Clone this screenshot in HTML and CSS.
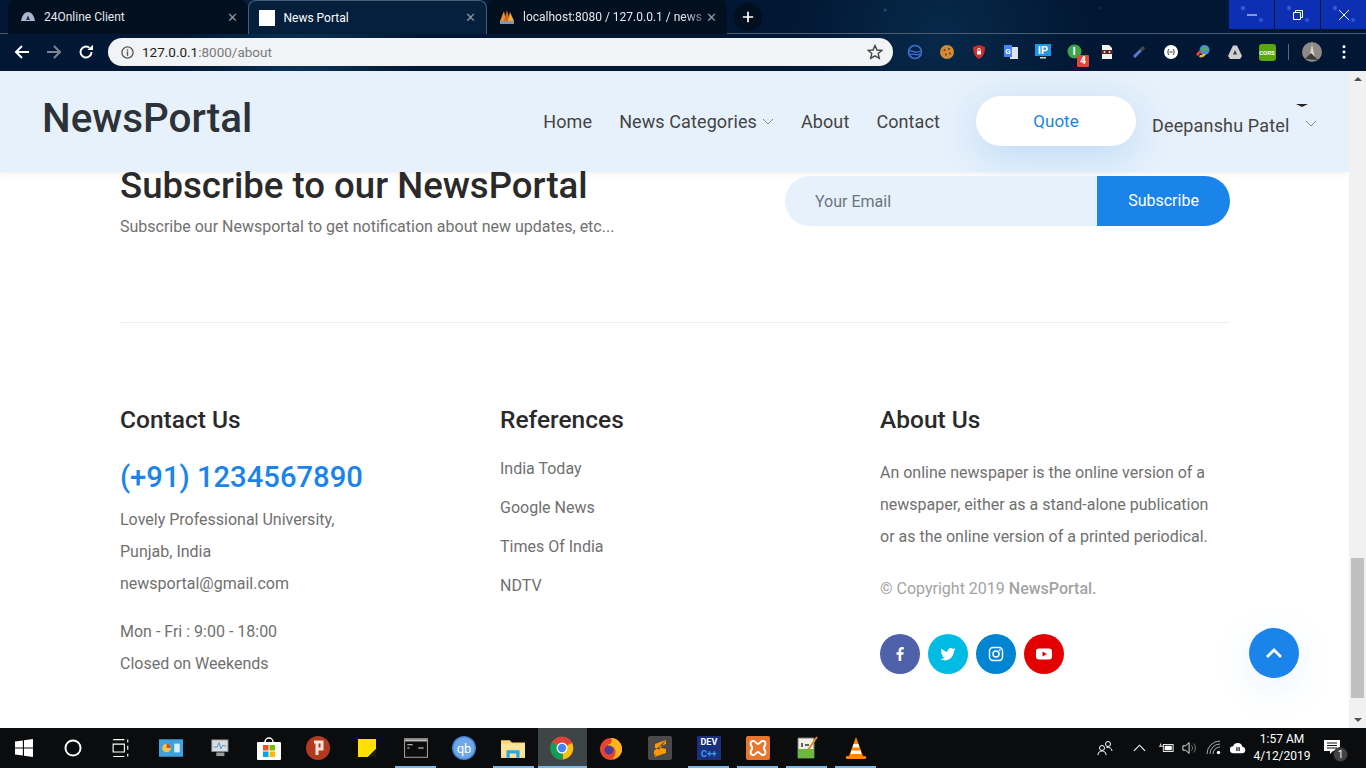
FILE: index.html
```html
<!DOCTYPE html>
<html lang="en">
<head>
  <meta charset="UTF-8">
  <title>News Portal</title>
  <link rel="stylesheet" href="styles.css">
</head>
<body>

  <!-- browser window top -->
  <div class="browser">
    <div class="tabstrip">
      <div class="tab">
        <svg class="tab-icon" viewBox="0 0 16 16"><path d="M1 12 C2 6 5 3 8 3 C11 3 14 6 15 12 Z" fill="#a9b6cc"/><path d="M6 11 L8 6.5 L10 11 Z" fill="#24304c"/></svg>
        <span class="tab-title">24Online Client</span>
        <span class="tab-close">✕</span>
      </div>
      <div class="tab active">
        <span class="blank-favicon"></span>
        <span class="tab-title">News Portal</span>
        <span class="tab-close">✕</span>
      </div>
      <div class="tab">
        <svg class="tab-icon" viewBox="0 0 16 16"><path d="M1 12 L5 2 L7 12 Z" fill="#e8912c"/><path d="M5 12 L8 1 L11 12 Z" fill="#d9661f"/><path d="M9 12 L11 3 L15 12 Z" fill="#f0ac3c"/><rect x="1" y="12" width="14" height="3" fill="#8a93a8"/></svg>
        <span class="tab-title fade">localhost:8080 / 127.0.0.1 / news</span>
        <span class="tab-close">✕</span>
      </div>
      <div class="newtab">
        <svg viewBox="0 0 14 14"><path d="M7 1 V13 M1 7 H13" stroke="#fff" stroke-width="2"/></svg>
      </div>
      <div class="winctl">
        <span class="winbtn"><svg viewBox="0 0 10 10"><path d="M0 5 H10" stroke="#fff"/></svg></span>
        <span class="winbtn"><svg viewBox="0 0 10 10"><path d="M2.5 2.5 V.5 H9.5 V7.5 H7.5 M.5 2.5 H7.5 V9.5 H.5 Z" stroke="#fff" fill="none"/></svg></span>
        <span class="winbtn"><svg viewBox="0 0 10 10"><path d="M0 0 L10 10 M10 0 L0 10" stroke="#fff"/></svg></span>
      </div>
    </div>
    <div class="toolbar">
      <svg class="navicon" viewBox="0 0 16 16"><path d="M15 8 H2 M8 2 L2 8 L8 14" stroke="#fff" stroke-width="2" fill="none"/></svg>
      <svg class="navicon" viewBox="0 0 16 16"><path d="M1 8 H14 M8 2 L14 8 L8 14" stroke="#7d8791" stroke-width="2" fill="none"/></svg>
      <svg class="navicon" viewBox="0 0 16 16"><path d="M13.5 8 A5.5 5.5 0 1 1 11.5 3.8" stroke="#fff" stroke-width="2" fill="none"/><path d="M9.5 6 H15 V.8 Z" fill="#fff"/></svg>
      <div class="omnibox">
        <svg class="info" viewBox="0 0 14 14"><circle cx="7" cy="7" r="6" fill="none" stroke="#555" stroke-width="1.4"/><path d="M7 6 V10.5 M7 3.5 V5" stroke="#555" stroke-width="1.5"/></svg>
        <span class="url"><span class="url-host">127.0.0.1</span>:8000/about</span>
        <svg class="star" viewBox="0 0 16 16"><path d="M8 1.5 L10 6 L14.8 6.4 L11.2 9.6 L12.3 14.4 L8 11.8 L3.7 14.4 L4.8 9.6 L1.2 6.4 L6 6 Z" fill="none" stroke="#444" stroke-width="1.4"/></svg>
      </div>
      <div class="extensions">
        <span class="ext"><svg viewBox="0 0 16 16"><circle cx="8" cy="8" r="6.5" fill="none" stroke="#3a6fd8" stroke-width="1.6"/><path d="M2 8 C5 4 7 11 14 7 M3 11 C6 8 9 13 13 10" stroke="#3a6fd8" fill="none" stroke-width="1.3"/></svg></span>
        <span class="ext"><svg viewBox="0 0 16 16"><circle cx="8" cy="8" r="7" fill="#d08a38"/><circle cx="5.5" cy="6" r="1" fill="#6b3a12"/><circle cx="10" cy="5" r="1" fill="#6b3a12"/><circle cx="7" cy="10.5" r="1" fill="#6b3a12"/><circle cx="11" cy="9.5" r="1" fill="#6b3a12"/></svg></span>
        <span class="ext"><svg viewBox="0 0 16 16"><path d="M8 1 L14 3 C14 9 12 13 8 15 C4 13 2 9 2 3 Z" fill="#c9302c"/><rect x="6" y="7" width="4" height="3.5" fill="#fff"/><path d="M6.8 7 V5.6 A1.2 1.2 0 0 1 9.2 5.6 V7" stroke="#fff" fill="none"/></svg></span>
        <span class="ext"><svg viewBox="0 0 16 16"><rect x="7" y="3" width="8" height="12" fill="#dfe3ea"/><rect x="1" y="1" width="8" height="12" fill="#4285f4"/><text x="5" y="10" text-anchor="middle" class="ext-text">G</text></svg></span>
        <span class="ext"><svg viewBox="0 0 16 16"><rect x="0" y="0" width="16" height="12" fill="#1e96e6"/><text x="8" y="10" text-anchor="middle" class="ext-ip">IP</text><rect x="5" y="13" width="6" height="1.5" fill="#cfd8e0"/></svg></span>
        <span class="ext"><svg viewBox="0 0 16 16"><circle cx="7.5" cy="7.500" r="7" fill="#3fa34d"/><text x="7" y="11" text-anchor="middle" class="ext-ip">I</text></svg><span class="ext-badge">4</span></span>
        <span class="ext"><svg viewBox="0 0 16 16"><path d="M3 1 H10 L13 4 V15 H3 Z" fill="#f2f2f2"/><rect x="2" y="6" width="12" height="4" rx="1" fill="#5a2420"/><circle cx="5.5" cy="8" r="1" fill="#f2f2f2"/><circle cx="10.5" cy="8" r="1" fill="#f2f2f2"/></svg></span>
        <span class="ext"><svg viewBox="0 0 16 16"><path d="M3 13 L10 6" stroke="#5a77c8" stroke-width="3"/><path d="M10 6 L13 3" stroke="#444" stroke-width="3.5"/></svg></span>
        <span class="ext"><svg viewBox="0 0 16 16"><circle cx="8" cy="8" r="7" fill="#fff"/><path d="M6 5 C4.5 7 4.5 9 6 11 M10 5 C11.5 7 11.5 9 10 11 M6.5 8 H9.5" stroke="#333" fill="none"/></svg></span>
        <span class="ext"><svg viewBox="0 0 16 16"><circle cx="9.5" cy="6" r="5" fill="#4a90d9"/><path d="M6 5 C8 3 11 3 13 6 L9 7 Z" fill="#56b04a"/><path d="M1 11 C2 7 5 6 7 7 L6 9 C5 9 4 10 4 12 Z" fill="#e8452c"/><path d="M4 13 C6 14 10 13 11 10 L8 10 C7 11 6 11 5 11 Z" fill="#f5b82e"/></svg></span>
        <span class="ext"><svg viewBox="0 0 16 16"><path d="M6 1.5 H10 L15 12 L13 15 H3 L1 12 Z" fill="#cfcfcf"/><path d="M8 6 L10 10.5 H6 Z" fill="#3a3a3a"/></svg></span>
        <span class="ext"><span class="cors">CORS</span></span>
      </div>
      <span class="toolbar-sep"></span>
      <svg class="avatar" viewBox="0 0 20 20"><circle cx="10" cy="10" r="10" fill="#8d8a86"/><path d="M10 2 L13 16 L7 16 Z" fill="#d8d4cc"/><path d="M3 17 L9 11 L16 18 Z" fill="#3c3a38"/></svg>
      <svg class="menu-dots" viewBox="0 0 4 16"><circle cx="2" cy="2" r="1.7" fill="#fff"/><circle cx="2" cy="8" r="1.7" fill="#fff"/><circle cx="2" cy="14" r="1.7" fill="#fff"/></svg>
    </div>
  </div>

  <!-- page viewport -->
  <div class="viewport">
    <div class="page">
      <header class="site-header">
        <a class="logo">NewsPortal</a>
        <nav class="nav">
          <a>Home</a>
          <a>News Categories <svg class="chev" viewBox="0 0 12 7"><path d="M1 1 L6 6 L11 1" fill="none" stroke="#888"/></svg></a>
          <a>About</a>
          <a>Contact</a>
        </nav>
        <a class="quote">Quote</a>
        <div class="user">
          <span class="caret"></span>
          <span class="user-name">Deepanshu Patel</span>
          <svg class="chev user-chev" viewBox="0 0 12 7"><path d="M1 1 L6 6 L11 1" fill="none" stroke="#888"/></svg>
        </div>
      </header>

      <section class="subscribe">
        <div>
          <h2>Subscribe to our NewsPortal</h2>
          <p>Subscribe our Newsportal to get notification about new updates, etc...</p>
        </div>
        <form class="subscribe-form">
          <span class="email">Your Email</span>
          <span class="subscribe-btn">Subscribe</span>
        </form>
      </section>

      <footer class="footer">
        <div class="col">
          <h3>Contact Us</h3>
          <div class="phone">(+91) 1234567890</div>
          <ul class="lines">
            <li>Lovely Professional University,</li>
            <li>Punjab, India</li>
            <li>newsportal@gmail.com</li>
          </ul>
          <ul class="lines hours">
            <li>Mon - Fri : 9:00 - 18:00</li>
            <li>Closed on Weekends</li>
          </ul>
        </div>
        <div class="col">
          <h3>References</h3>
          <ul class="refs">
            <li>India Today</li>
            <li>Google News</li>
            <li>Times Of India</li>
            <li>NDTV</li>
          </ul>
        </div>
        <div class="col">
          <h3>About Us</h3>
          <p class="about">An online newspaper is the online version of a newspaper, either as a stand-alone publication or as the online version of a printed periodical.</p>
          <p class="copy">© Copyright 2019 <b>NewsPortal.</b></p>
          <div class="social">
            <span class="soc fb"><svg viewBox="0 0 16 16"><path d="M9.2 15 V8.8 H11.4 L11.7 6.300 H9.200 V4.800 C9.200 4 9.500 3.500 10.500 3.500 H11.800 V1.200 C11.500 1.200 10.800 1.100 9.900 1.100 C8 1.100 6.600 2.300 6.600 4.500 V6.300 H4.500 V8.800 H6.600 V15 Z" fill="#fff"/></svg></span>
            <span class="soc tw"><svg viewBox="0 0 16 16"><path d="M15.500 3.300 C15 3.600 14.400 3.700 13.800 3.800 C14.400 3.400 14.900 2.800 15.100 2.100 C14.500 2.500 13.800 2.700 13.100 2.900 C12.500 2.300 11.700 1.900 10.800 1.900 C9.100 1.900 7.700 3.300 7.700 5 C7.700 5.200 7.700 5.500 7.800 5.700 C5.200 5.600 2.900 4.300 1.400 2.400 C1.100 2.900 1 3.400 1 4 C1 5.100 1.500 6 2.400 6.600 C1.900 6.600 1.400 6.400 1 6.200 C1 7.700 2.100 9 3.500 9.300 C3 9.400 2.600 9.500 2.100 9.400 C2.500 10.700 3.700 11.600 5 11.600 C3.600 12.700 1.900 13.200 .3 13 C1.700 13.900 3.300 14.400 5 14.400 C10.700 14.400 13.800 9.700 13.800 5.600 V5.200 C14.500 4.700 15.100 4.100 15.500 3.300 Z" fill="#fff"/></svg></span>
            <span class="soc ig"><svg viewBox="0 0 16 16"><rect x="1.500" y="1.500" width="13" height="13" rx="3.500" fill="none" stroke="#fff" stroke-width="1.500"/><circle cx="8" cy="8" r="3" fill="none" stroke="#fff" stroke-width="1.500"/><circle cx="11.800" cy="4.200" r=".9" fill="#fff"/></svg></span>
            <span class="soc yt"><svg viewBox="0 0 16 16"><rect x="0" y="2.500" width="16" height="11" rx="3" fill="#fff"/><path d="M6.500 5.500 L10.800 8 L6.500 10.500 Z" fill="#e30000"/></svg></span>
          </div>
        </div>
      </footer>

      <a class="to-top"><svg viewBox="0 0 18 12"><path d="M2 10 L9 3 L16 10" fill="none" stroke="#fff" stroke-width="2.800"/></svg></a>
    </div>

    <div class="scrollbar">
      <span class="arrow-up"></span>
      <span class="track"><span class="thumb"></span></span>
      <span class="arrow-down"></span>
    </div>
  </div>

  <!-- windows taskbar -->
  <div class="taskbar">
    <span class="slot"><svg viewBox="0 0 16 16"><path d="M0 2.300 L7 1.300 V7.500 H0 Z M8 1.100 L16 0 V7.500 H8 Z M0 8.500 H7 V14.700 L0 13.700 Z M8 8.500 H16 V16 L8 14.900 Z" fill="#fff"/></svg></span>
    <span class="slot"><svg viewBox="0 0 16 16"><circle cx="8" cy="8" r="6.700" fill="none" stroke="#fff" stroke-width="1.700"/></svg></span>
    <span class="slot"><svg viewBox="0 0 18 16"><path d="M1 .500 H11 M1 15.500 H11 M1 4.500 H11 V11.500 H1 Z M14 .500 V3 M14 6 V9.500 M14 13 V15.500" stroke="#fff" fill="none"/></svg></span>
    <span class="slot"><svg viewBox="0 0 22 16"><rect width="22" height="16" fill="#3da2e0"/><circle cx="7" cy="8" r="4" fill="#f5c542"/><path d="M7 8 V4 A4 4 0 0 1 11 8 Z" fill="#d64a2c"/><rect x="14" y="4" width="5" height="8" fill="#d8eefb"/></svg></span>
    <span class="slot"><svg viewBox="0 0 22 20"><rect x="2" y="1" width="18" height="13" fill="#d8dde2" stroke="#888"/><path d="M4 9 L8 9 L10 4 L12 11 L14 7 L18 8" stroke="#4a8ec8" fill="none"/><rect x="7" y="15" width="9" height="4" fill="#9a9a9a"/></svg></span>
    <span class="slot"><svg viewBox="0 0 24 24"><path d="M8 6 A4 4 0 0 1 16 6" fill="none" stroke="#fff" stroke-width="1.500"/><rect y="6" width="24" height="18" rx="1" fill="#fff"/><rect x="6" y="9" width="5.500" height="5.500" fill="#f25022"/><rect x="12.500" y="9" width="5.500" height="5.500" fill="#7fba00"/><rect x="6" y="15.500" width="5.500" height="5.500" fill="#00a4ef"/><rect x="12.500" y="15.500" width="5.500" height="5.500" fill="#ffb900"/></svg></span>
    <span class="slot"><svg viewBox="0 0 24 24"><circle cx="12" cy="12" r="12" fill="#b3391f"/><path d="M8 6 H16 V13 H11 M11 6 V19" fill="none" stroke="#f4e6da" stroke-width="3"/></svg></span>
    <span class="slot"><svg viewBox="0 0 18 18"><path d="M0 0 H18 V10 L10 18 H0 Z" fill="#ffdf00"/><path d="M18 10 V18 H10 Z" fill="#1a1a1a"/></svg></span>
    <span class="slot on"><svg viewBox="0 0 22 18"><rect x=".500" y=".500" width="21" height="17" fill="#0c0c0c" stroke="#999"/><rect x="1" y="1" width="20" height="2" fill="#bbb"/><path d="M3 6 H8 M3 9 H5 M13 9 H18" stroke="#ddd"/></svg></span>
    <span class="slot"><svg viewBox="0 0 24 24"><circle cx="12" cy="12" r="12" fill="#3f83d6"/><circle cx="12" cy="12" r="10.500" fill="#6ea6e6"/><text x="12" y="16.500" text-anchor="middle" class="qb">qb</text></svg></span>
    <span class="slot on split"><svg viewBox="0 0 22 18"><path d="M0 2 H8 L10 4 H22 V18 H0 Z" fill="#f7d774"/><rect y="5" width="22" height="13" fill="#fbe49a"/><path d="M5 18 V11 H17 V18 H14 V14 H8 V18 Z" fill="#29a8e0"/></svg></span>
    <span class="slot on current"><svg viewBox="0 0 24 24"><circle cx="12" cy="12" r="11.500" fill="#db4437"/><path d="M12 12 L22 7 A11.500 11.500 0 0 1 13 23.500 Z" fill="#f4c20d"/><path d="M12 12 L13 23.500 A11.500 11.500 0 0 1 2 6 Z" fill="#0f9d58"/><circle cx="12" cy="12" r="5.500" fill="#fff"/><circle cx="12" cy="12" r="4.200" fill="#4285f4"/></svg></span>
    <span class="slot"><svg viewBox="0 0 24 24"><circle cx="12" cy="13" r="11" fill="#e8442a"/><path d="M12 2 C19 2 24 8 23 15 C22 20 17 23 13 23 C17 20 18 14 14 11 C11 12 8 11 9 8 C11 9 14 7 12 2 Z" fill="#fbb41c"/><circle cx="10" cy="14" r="4.500" fill="#4d3a9c"/></svg></span>
    <span class="slot"><svg viewBox="0 0 24 24"><rect width="24" height="24" rx="2" fill="#4a4a4a"/><path d="M18 4 L7 8 V12 L15 15 L6 19 V15 M18 4 V8 L10 11 L18 13 V17 L6 21" fill="#ff9800"/></svg></span>
    <span class="slot on"><span class="devcpp"><span>DEV</span><span class="cpp">C++</span></span></span>
    <span class="slot on"><svg viewBox="0 0 24 24"><rect width="24" height="24" rx="2" fill="#e8762c"/><path d="M7 5 C10 5 10 8 12 8 C14 8 14 5 17 5 C20 5 20 9 18 11 V13 C20 15 20 19 17 19 C14 19 14 16 12 16 C10 16 10 19 7 19 C4 19 4 15 6 13 V11 C4 9 4 5 7 5 Z" fill="none" stroke="#fff" stroke-width="2"/></svg></span>
    <span class="slot on"><svg viewBox="0 0 24 24"><path d="M3 2 H19 V22 H3 Z" fill="#eef1e4" stroke="#777"/><rect x="3" y="13" width="16" height="9" fill="#6bb83a"/><path d="M7 7 V11 M10 9 H14" stroke="#333" stroke-width="1.500"/><path d="M22 1 L13 14" stroke="#d98a1f" stroke-width="2"/></svg></span>
    <span class="slot on"><svg viewBox="0 0 22 24"><path d="M11 1 L18 20 H4 Z" fill="#ff8800"/><path d="M8.500 8 H13.500 L14.500 11.500 H7.500 Z M6.500 14.500 H15.500 L16.500 18 H5.500 Z" fill="#f5f5f5"/><rect x="1" y="20" width="20" height="3" rx="1" fill="#ff8800"/></svg></span>

    <div class="tray">
      <svg class="tray-icon" viewBox="0 0 16 16"><circle cx="5" cy="8" r="2.500" fill="none" stroke="#fff"/><path d="M1 15 C1 12 3 11 5 11 C7 11 9 12 9 15" fill="none" stroke="#fff"/><circle cx="11" cy="4" r="2.500" fill="none" stroke="#fff"/><path d="M9.500 7.500 C12 7 15 8 15 11" fill="none" stroke="#fff"/></svg>
      <svg class="tray-icon up" viewBox="0 0 14 8"><path d="M1 7 L7 1 L13 7" fill="none" stroke="#fff" stroke-width="1.200"/></svg>
      <svg class="tray-icon" viewBox="0 0 18 14"><rect x="6" y="3" width="11" height="8" fill="none" stroke="#fff"/><rect x="7.500" y="4.500" width="8" height="5" fill="#fff"/><path d="M1 5 H6 M3 2 V5" stroke="#fff"/></svg>
      <svg class="tray-icon" viewBox="0 0 18 16"><path d="M1 5.500 H4 L8 2 V14 L4 10.500 H1 Z" fill="none" stroke="#fff"/><path d="M10.500 5 A4 4 0 0 1 10.500 11 M13 3 A7 7 0 0 1 13 13" fill="none" stroke="#888"/></svg>
      <svg class="tray-icon" viewBox="0 0 16 16"><path d="M1 14 A13 13 0 0 1 14 1 M4 14 A10 10 0 0 1 14 4 M7 14 A7 7 0 0 1 14 7" fill="none" stroke="#aaa"/><circle cx="12.500" cy="12.500" r="1.700" fill="#fff"/></svg>
      <svg class="tray-icon" viewBox="0 0 18 12"><path d="M4 12 A4 4 0 0 1 3.500 4 A5.500 5.500 0 0 1 14 4.500 A3.800 3.800 0 0 1 14 12 Z" fill="#fff"/><rect x="7" y="5" width="1.500" height="4.500" fill="#222"/><rect x="9.500" y="5" width="1.500" height="4.500" fill="#222"/></svg>
      <div class="clock">
        <span>1:57 AM</span>
        <span>4/12/2019</span>
      </div>
      <div class="notif">
        <svg viewBox="0 0 16 16"><path d="M0 1 H16 V12 H9 L6 15 V12 H0 Z" fill="#fff"/><path d="M3 4 H13 M3 6.500 H13 M3 9 H13" stroke="#111"/></svg>
        <span class="notif-count">1</span>
      </div>
    </div>
  </div>

</body>
</html>
```

FILE: styles.css
```css
* {
  box-sizing: border-box;
}

body {
  margin: 0;
  height: 100vh;
  overflow: hidden;
  display: flex;
  flex-direction: column;
  font-family: Roboto, sans-serif;
  background: #fff;
}

svg {
  display: block;
}

h2, h3, p, ul {
  margin: 0;
  padding: 0;
}

ul {
  list-style: none;
}

/* browser top */
.browser {
  height: 71px;
  flex-shrink: 0;
  background:
    radial-gradient(circle at 150px 50px, #5a7a9a 0, transparent 1px),
    radial-gradient(circle at 620px 45px, #4f7296 0, transparent 1px),
    radial-gradient(circle at 885px 10px, #3c6084 0, transparent 2px),
    radial-gradient(circle at 1100px 8px, #3c6084 0, transparent 1px),
    radial-gradient(circle at 300px 60px, #0a3358, transparent 120px),
    radial-gradient(circle at 940px 35px, #07294a, transparent 150px),
    #021733;
}

.tabstrip {
  height: 34px;
  display: flex;
  padding-left: 8px;
  border-bottom: 1px solid #4a5d74;
}

.tab {
  width: 239.500px;
  height: 34px;
  display: flex;
  align-items: center;
  padding: 0 9px 0 12px;
  color: #e4e8ee;
  font: 12px Roboto, sans-serif;
  background: #020f1f;
  border-radius: 8px 8px 0 0;
}

.tab.active {
  background: #04203c;
  color: #fff;
  padding-left: 10px;
  border: 1px solid #4a5d74;
  border-bottom: 0;
}

.tab-icon {
  width: 16px;
  height: 16px;
  margin-right: 8px;
  flex-shrink: 0;
}

.blank-favicon {
  width: 16px;
  height: 16px;
  margin-right: 9px;
  background: #fff;
  flex-shrink: 0;
}

.tab-title {
  flex: 1;
  white-space: nowrap;
  overflow: hidden;
}

.fade {
  -webkit-mask-image: linear-gradient(90deg, #000 90%, #0006);
}

.tab-close {
  color: #8b96a3;
  font-size: 13px;
  margin: 0 1px 0 4px;
}

.newtab {
  width: 28px;
  height: 28px;
  margin: 3px 0 0 7px;
  border-radius: 50%;
  background: #020f1f;
  display: flex;
  align-items: center;
  justify-content: center;
}

.newtab svg {
  width: 12px;
  height: 12px;
}

.winctl {
  margin-left: auto;
  height: 29px;
  display: flex;
  gap: 1px;
}

.winbtn {
  width: 45px;
  height: 29px;
  background: radial-gradient(circle at 14px 8px, #4a72e0 0, transparent 3px), radial-gradient(circle at 32px 20px, #3f66d8 0, transparent 3px), #0c2fb4;
  display: flex;
  align-items: center;
  justify-content: center;
}

.winbtn svg {
  width: 10px;
  height: 10px;
}

.toolbar {
  height: 37px;
  display: flex;
  align-items: center;
  padding: 0 0 1px 14px;
}

.navicon {
  width: 16px;
  height: 16px;
  margin-right: 16px;
}

.omnibox {
  width: 785px;
  height: 28px;
  margin-left: -2px;
  border-radius: 14px;
  background: #f1f3f4;
  display: flex;
  align-items: center;
  padding: 0 10px 0 13px;
  font-size: 13.500px;
  color: #7a7a7a;
}

.info {
  width: 13px;
  height: 13px;
  margin-right: 8px;
}

.url {
  flex: 1;
}

.url-host {
  color: #222;
}

.star {
  width: 16px;
  height: 16px;
}

.extensions {
  display: flex;
  margin-left: 6px;
}

.ext {
  width: 32px;
  height: 28px;
  position: relative;
  display: flex;
  align-items: center;
  justify-content: center;
}

.ext svg {
  width: 16px;
  height: 16px;
}

.ext-text {
  font: bold 8px Roboto, sans-serif;
  fill: #fff;
}

.ext-ip {
  font: bold 11px Roboto, sans-serif;
  fill: #fff;
}

.ext-badge {
  position: absolute;
  right: 2px;
  bottom: -1px;
  width: 12px;
  height: 12px;
  border-radius: 1px;
  background: #e2453c;
  color: #fff;
  font-size: 10px;
  font-weight: bold;
  line-height: 12px;
  text-align: center;
}

.cors {
  width: 17px;
  height: 17px;
  border-radius: 3px;
  background: #5aa70f;
  color: #fff;
  font-size: 6px;
  font-weight: bold;
  line-height: 17px;
  text-align: center;
}

.toolbar-sep {
  width: 1px;
  height: 16px;
  margin: 0 13px 0 5px;
  background: #5d6b79;
}

.avatar {
  width: 20px;
  height: 20px;
  margin-right: 20px;
}

.menu-dots {
  width: 4px;
  height: 14px;
}

/* page */
.viewport {
  flex: 1;
  display: flex;
  min-height: 0;
}

.page {
  flex: 1;
  position: relative;
  overflow: hidden;
}

.site-header {
  height: 101px;
  background: #e6f1fb;
  box-shadow: 0 2px 6px rgba(0, 0, 0, 0.06);
  display: flex;
  align-items: center;
  padding-left: 42px;
  color: #444;
  font-size: 18px;
}

.logo {
  font-size: 40.400px;
  font-weight: 500;
  color: #2d3238;
  margin-top: -6px;
}

.nav {
  display: flex;
  gap: 27px;
  margin-left: auto;
  margin-right: 36px;
  align-items: center;
  letter-spacing: 0.1px;
}

.nav a {
  display: flex;
  align-items: center;
  gap: 5px;
}

.chev {
  width: 12px;
  height: 7px;
}

.quote {
  width: 160px;
  height: 50px;
  margin-top: -2px;
  border-radius: 25px;
  background: #fff;
  color: #1a84ea;
  font-size: 17px;
  line-height: 50px;
  text-align: center;
  box-shadow: 0 10px 40px rgba(26, 132, 234, 0.2);
}

.user {
  width: 213px;
  align-self: stretch;
  position: relative;
  display: flex;
  align-items: center;
  padding: 8px 0 0 16px;
  letter-spacing: 0.15px;
}

.user-chev {
  margin-left: 16px;
  margin-top: -4px;
}

.caret {
  position: absolute;
  left: 160px;
  top: 33px;
  border-top: 3px solid #222;
  border-left: 6px solid transparent;
  border-right: 6px solid transparent;
}

.subscribe {
  margin: 0 119px 0 120px;
  display: flex;
  justify-content: space-between;
  padding-bottom: 83px;
  border-bottom: 1px solid #e6f1fb;
}

.subscribe h2 {
  font-size: 36.600px;
  font-weight: 500;
  line-height: 28px;
  color: #2a2a2a;
}

.subscribe p {
  font-size: 16px;
  line-height: 24px;
  margin-top: 15px;
  color: #707070;
}

.subscribe-form {
  width: 445px;
  height: 50px;
  margin-top: 4px;
  display: flex;
  font-size: 16px;
}

.email {
  flex: 1;
  background: #e6f1fb;
  border-radius: 25px 0 0 25px;
  line-height: 52px;
  padding-left: 30px;
  color: #6c757d;
}

.subscribe-btn {
  width: 133px;
  background: #1a84ea;
  color: #fff;
  border-radius: 0 25px 25px 0;
  line-height: 50px;
  text-align: center;
}

.footer {
  margin-left: 120px;
  padding-top: 79px;
  display: grid;
  grid-template-columns: 380px 380px 345px;
  color: #707070;
  font-size: 16px;
}

.footer h3 {
  font-size: 24.500px;
  font-weight: 500;
  line-height: 36px;
  color: #2a2a2a;
}

.phone {
  font-size: 29.200px;
  font-weight: 500;
  color: #1a84ea;
  line-height: 40px;
  margin: 19px 0 7px;
}

.lines li {
  line-height: 32px;
}

.hours {
  margin-top: 16px;
}

.refs {
  margin-top: 11px;
}

.refs li {
  line-height: 39px;
}

.about {
  line-height: 32px;
  margin-top: 19px;
}

.copy {
  color: #a3a3a3;
  line-height: 32px;
  margin-top: 20px;
}

.copy b {
  font-weight: 500;
}

.social {
  display: flex;
  gap: 8px;
  margin-top: 29px;
}

.soc {
  width: 40px;
  height: 40px;
  border-radius: 50%;
  display: flex;
  align-items: center;
  justify-content: center;
}

.soc svg {
  width: 16px;
  height: 16px;
}

.fb { background: #4f61ab; }
.tw { background: #00bce4; }
.ig { background: #0085d2; }
.yt { background: #e30000; }

.to-top {
  position: absolute;
  left: 1249px;
  top: 557px;
  width: 50px;
  height: 50px;
  border-radius: 50%;
  background: #1a84ea;
  box-shadow: 0 10px 40px rgba(26, 132, 234, 0.1);
  display: flex;
  align-items: center;
  justify-content: center;
}

.to-top svg {
  width: 18px;
  height: 12px;
}

.scrollbar {
  width: 17px;
  background: #f1f1f1;
  display: flex;
  flex-direction: column;
  align-items: center;
}

.arrow-up, .arrow-down {
  width: 0;
  height: 0;
  margin: 6px 0;
  border-left: 4px solid transparent;
  border-right: 4px solid transparent;
}

.arrow-up {
  border-bottom: 4px solid #505050;
}

.arrow-down {
  border-top: 4px solid #505050;
}

.track {
  flex: 1;
  width: 100%;
  padding: 471px 2px 0;
}

.thumb {
  display: block;
  width: 100%;
  height: 140px;
  background: #bfbfbf;
}

/* taskbar */
.taskbar {
  height: 40px;
  flex-shrink: 0;
  background: #0a0c0d;
  display: flex;
  color: #fff;
}

.slot {
  width: 48.900px;
  height: 40px;
  flex-shrink: 0;
  display: flex;
  align-items: center;
  justify-content: center;
  position: relative;
}

.slot svg {
  max-width: 24px;
  height: 18px;
}

.slot:nth-child(n+6) svg {
  height: 24px;
  width: 24px;
}

.slot:nth-child(8) svg {
  width: 18px;
  height: 18px;
}

.slot.on::after {
  content: "";
  position: absolute;
  left: 4px;
  right: 4px;
  bottom: 0;
  height: 2px;
  background: #76b9ed;
}

.slot.current {
  background: #3e4546;
}

.slot.current::after {
  left: 0;
  right: 0;
}

.qb {
  font: 13px Roboto, sans-serif;
  fill: #fff;
}

.devcpp {
  width: 24px;
  height: 24px;
  background: #1a2f80;
  display: flex;
  flex-direction: column;
  align-items: center;
  justify-content: space-around;
  font-size: 9px;
  font-weight: bold;
  line-height: 10px;
}

.cpp {
  color: #3aa0e8;
}

.tray {
  margin-left: auto;
  display: flex;
  align-items: center;
  padding-right: 24px;
}

.tray-icon {
  width: 16px;
  height: 16px;
  margin-right: 8px;
}

.tray-icon.up {
  width: 13px;
  height: 8px;
  margin: 0 12px;
}

.clock {
  width: 70px;
  display: flex;
  flex-direction: column;
  align-items: center;
  font: 12px/17px Roboto, sans-serif;
  margin: 0 7px 0 -7px;
}

.notif {
  position: relative;
  width: 18px;
  height: 18px;
}

.notif svg {
  width: 16px;
  height: 16px;
}

.notif-count {
  position: absolute;
  right: -6px;
  bottom: -5px;
  width: 15px;
  height: 15px;
  border-radius: 50%;
  background: #444;
  border: 1px solid #222;
  font-size: 10px;
  line-height: 13px;
  text-align: center;
}
```
